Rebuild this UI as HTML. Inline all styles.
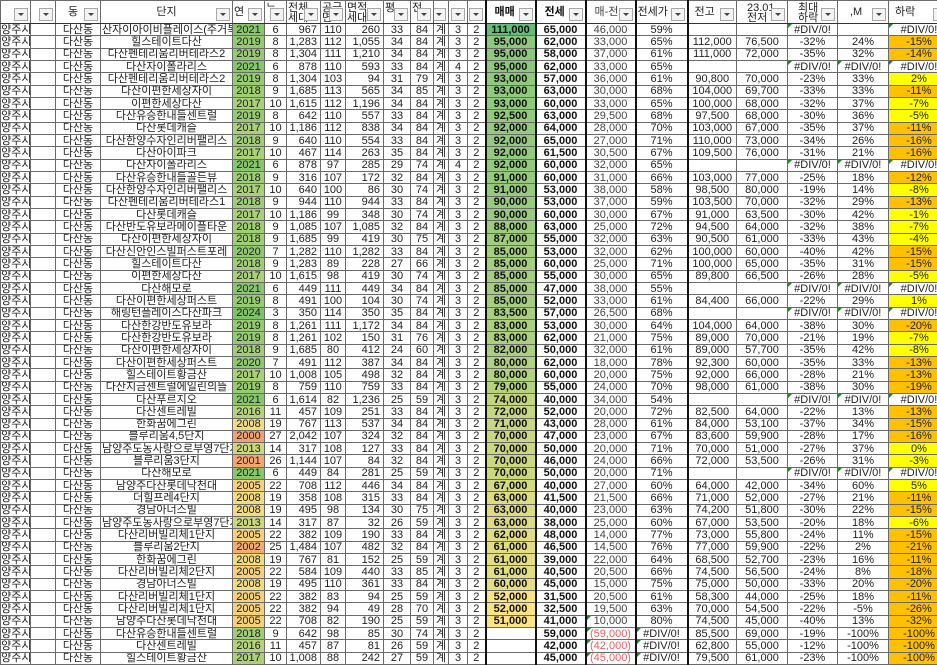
<!DOCTYPE html>
<html><head><meta charset="utf-8"><style>
body{margin:0;width:937px;height:664px;overflow:hidden;background:#fff;font-family:"Liberation Sans","Noto Sans CJK KR",sans-serif;}
table{border-collapse:collapse;table-layout:fixed;position:absolute;left:0;top:0;width:949px}
td{border:1px solid #6a6a6a;padding:0 1px;font-size:11px;line-height:10px;white-space:nowrap;overflow:hidden;text-align:center;color:#222;position:relative}
tr{height:12.33px}
tr.h{height:23px}
tr.h td{vertical-align:top;padding-top:2px;font-size:11px;line-height:10px;border-bottom:1px solid #333}
td:nth-child(1){text-align:left}
td:nth-child(7),td:nth-child(9){text-align:right;padding-right:3px}
td:nth-child(15),td:nth-child(16),td:nth-child(17),td:nth-child(18),td:nth-child(19){border-left:2px solid #111}
td:nth-child(15),td:nth-child(16){font-weight:bold;color:#111}
td:nth-child(17){color:#444}
.a{margin-left:-11px}
.f{position:absolute;right:2px;bottom:2px;width:12px;height:11px;border:1px solid #a8a8a8;background:#f3f3f3}
.f:after{content:"";position:absolute;left:3px;top:4px;border-left:3px solid transparent;border-right:3px solid transparent;border-top:3px solid #444}
.e:before{content:"";position:absolute;left:0;top:0;border-top:4px solid #1a8a1a;border-right:4px solid transparent}
.o{background:#ffc000}.y{background:#ffff00}
.red{color:#f06060!important}
.y24{background:#7ec36a}.y21{background:#88c66c}.y20{background:#8fc870}.y19{background:#97cb72}.y18{background:#a0ce74}.y17{background:#a9d177}.y16{background:#b5d47a}.y13{background:#cbd87c}.y08{background:#f3dc7a}.y05{background:#f6d17a}.y02{background:#f4ad70}.y01{background:#f4a66f}.y00{background:#f3a16e}
</style></head><body>
<table>
<colgroup><col style="width:30px"><col style="width:25px"><col style="width:45px"><col style="width:132px"><col style="width:32px"><col style="width:22px"><col style="width:34px"><col style="width:25px"><col style="width:38px"><col style="width:27px"><col style="width:23px"><col style="width:15px"><col style="width:19px"><col style="width:18px"><col style="width:50px"><col style="width:50px"><col style="width:50px"><col style="width:52px"><col style="width:49px"><col style="width:51px"><col style="width:50px"><col style="width:51px"><col style="width:61px"></colgroup>
<tr class="h"><td><i class="f"></i></td><td><i class="f"></i></td><td style="padding-top:6px;text-align:left;padding-left:12px">동<i class="f"></i></td><td style="padding-top:6px">단지<i class="f"></i></td><td style="padding-top:6px;text-align:left">연<i class="f"></i></td><td style="text-align:left">ᄂ<i class="f"></i></td><td style="text-align:left">전체<br>세대<i class="f"></i></td><td style="text-align:left">공급<br>면<i class="f"></i></td><td style="text-align:left">면적<br>세대<i class="f"></i></td><td style="text-align:left">평<i class="f"></i></td><td style="text-align:left">전<i class="f"></i></td><td><i class="f"></i></td><td><i class="f"></i></td><td><i class="f"></i></td><td style="padding-top:6px;text-align:left;padding-left:8px">매매<i class="f"></i></td><td style="padding-top:6px;text-align:left;padding-left:8px">전세<i class="f"></i></td><td style="padding-top:6px;text-align:left;padding-left:8px">매-전<i class="f"></i></td><td style="padding-top:6px;text-align:left">전세가<i class="f"></i></td><td style="padding-top:6px;text-align:left;padding-left:6px">전고<i class="f"></i></td><td style="text-align:left;padding-left:10px">23.01<br>전저<i class="f"></i></td><td style="text-align:left;padding-left:10px">최대<br>하락<i class="f"></i></td><td style="padding-top:6px;text-align:left;padding-left:12px">,M<i class="f"></i></td><td style="padding-top:6px;text-align:left;padding-left:6px">하락<i class="f"></i></td></tr>
<tr><td><span class="a">남양주시</span></td><td></td><td>다산동</td><td>산자이아이비플레이스(주거복합)</td><td class="y21">2021</td><td>6</td><td>967</td><td>110</td><td>260</td><td>33</td><td>84</td><td>계</td><td>3</td><td>2</td><td style="background:#63be7b">111,000</td><td>65,000</td><td>46,000</td><td>59%</td><td></td><td></td><td class="e">#DIV/0!</td><td></td><td class="e">#DIV/0!</td></tr>
<tr><td><span class="a">남양주시</span></td><td></td><td>다산동</td><td>힐스테이트다산</td><td class="y19">2019</td><td>8</td><td>1,283</td><td>112</td><td>1,055</td><td>34</td><td>84</td><td>계</td><td>3</td><td>2</td><td style="background:color-mix(in srgb,#fde483 27%,#63be7b)">95,000</td><td>62,000</td><td>33,000</td><td>65%</td><td>112,000</td><td>76,500</td><td>-32%</td><td>24%</td><td class="o">-15%</td></tr>
<tr><td><span class="a">남양주시</span></td><td></td><td>다산동</td><td>다산펜테리움리버테라스2</td><td class="y19">2019</td><td>8</td><td>1,304</td><td>111</td><td>1,210</td><td>34</td><td>84</td><td>계</td><td>3</td><td>2</td><td style="background:color-mix(in srgb,#fde483 27%,#63be7b)">95,000</td><td>58,000</td><td>37,000</td><td>61%</td><td>111,000</td><td>72,000</td><td>-35%</td><td>32%</td><td class="o">-14%</td></tr>
<tr><td><span class="a">남양주시</span></td><td></td><td>다산동</td><td>다산자이폴라리스</td><td class="y21">2021</td><td>6</td><td>878</td><td>110</td><td>593</td><td>33</td><td>84</td><td>계</td><td>4</td><td>2</td><td style="background:color-mix(in srgb,#fde483 27%,#63be7b)">95,000</td><td>62,000</td><td>33,000</td><td>65%</td><td></td><td></td><td class="e">#DIV/0!</td><td class="e">#DIV/0!</td><td class="e">#DIV/0!</td></tr>
<tr><td><span class="a">남양주시</span></td><td></td><td>다산동</td><td>다산펜테리움리버테라스2</td><td class="y19">2019</td><td>8</td><td>1,304</td><td>103</td><td>94</td><td>31</td><td>79</td><td>계</td><td>3</td><td>2</td><td style="background:color-mix(in srgb,#fde483 30%,#63be7b)">93,000</td><td>57,000</td><td>36,000</td><td>61%</td><td>90,800</td><td>70,000</td><td>-23%</td><td>33%</td><td class="y">2%</td></tr>
<tr><td><span class="a">남양주시</span></td><td></td><td>다산동</td><td>다산이편한세상자이</td><td class="y18">2018</td><td>9</td><td>1,685</td><td>113</td><td>565</td><td>34</td><td>85</td><td>계</td><td>3</td><td>2</td><td style="background:color-mix(in srgb,#fde483 30%,#63be7b)">93,000</td><td>63,000</td><td>30,000</td><td>68%</td><td>104,000</td><td>69,700</td><td>-33%</td><td>33%</td><td class="o">-11%</td></tr>
<tr><td><span class="a">남양주시</span></td><td></td><td>다산동</td><td>이편한세상다산</td><td class="y17">2017</td><td>10</td><td>1,615</td><td>112</td><td>1,196</td><td>34</td><td>84</td><td>계</td><td>3</td><td>2</td><td style="background:color-mix(in srgb,#fde483 30%,#63be7b)">93,000</td><td>60,000</td><td>33,000</td><td>65%</td><td>100,000</td><td>68,000</td><td>-32%</td><td>37%</td><td class="y">-7%</td></tr>
<tr><td><span class="a">남양주시</span></td><td></td><td>다산동</td><td>다산유승한내들센트럴</td><td class="y19">2019</td><td>8</td><td>642</td><td>110</td><td>557</td><td>33</td><td>84</td><td>계</td><td>3</td><td>2</td><td style="background:color-mix(in srgb,#fde483 31%,#63be7b)">92,500</td><td>63,000</td><td>29,500</td><td>68%</td><td>97,500</td><td>68,000</td><td>-30%</td><td>36%</td><td class="y">-5%</td></tr>
<tr><td><span class="a">남양주시</span></td><td></td><td>다산동</td><td>다산롯데캐슬</td><td class="y17">2017</td><td>10</td><td>1,186</td><td>112</td><td>838</td><td>34</td><td>84</td><td>계</td><td>3</td><td>2</td><td style="background:color-mix(in srgb,#fde483 32%,#63be7b)">92,000</td><td>64,000</td><td>28,000</td><td>70%</td><td>103,000</td><td>67,000</td><td>-35%</td><td>37%</td><td class="o">-11%</td></tr>
<tr><td><span class="a">남양주시</span></td><td></td><td>다산동</td><td>다산한양수자인리버팰리스</td><td class="y18">2018</td><td>9</td><td>640</td><td>110</td><td>554</td><td>33</td><td>84</td><td>계</td><td>3</td><td>2</td><td style="background:color-mix(in srgb,#fde483 32%,#63be7b)">92,000</td><td>65,000</td><td>27,000</td><td>71%</td><td>110,000</td><td>73,000</td><td>-34%</td><td>26%</td><td class="o">-16%</td></tr>
<tr><td><span class="a">남양주시</span></td><td></td><td>다산동</td><td>다산아이파크</td><td class="y17">2017</td><td>10</td><td>467</td><td>114</td><td>263</td><td>35</td><td>84</td><td>계</td><td>3</td><td>2</td><td style="background:color-mix(in srgb,#fde483 32%,#63be7b)">92,000</td><td>61,500</td><td>30,500</td><td>67%</td><td>109,500</td><td>76,000</td><td>-31%</td><td>21%</td><td class="o">-16%</td></tr>
<tr><td><span class="a">남양주시</span></td><td></td><td>다산동</td><td>다산자이폴라리스</td><td class="y21">2021</td><td>6</td><td>878</td><td>97</td><td>285</td><td>29</td><td>74</td><td>계</td><td>4</td><td>2</td><td style="background:color-mix(in srgb,#fde483 32%,#63be7b)">92,000</td><td>60,000</td><td>32,000</td><td>65%</td><td></td><td></td><td class="e">#DIV/0!</td><td class="e">#DIV/0!</td><td class="e">#DIV/0!</td></tr>
<tr><td><span class="a">남양주시</span></td><td></td><td>다산동</td><td>다산유승한내들골든뷰</td><td class="y18">2018</td><td>9</td><td>316</td><td>107</td><td>172</td><td>32</td><td>84</td><td>계</td><td>3</td><td>2</td><td style="background:color-mix(in srgb,#fde483 33%,#63be7b)">91,000</td><td>60,000</td><td>31,000</td><td>66%</td><td>103,000</td><td>77,000</td><td>-25%</td><td>18%</td><td class="o">-12%</td></tr>
<tr><td><span class="a">남양주시</span></td><td></td><td>다산동</td><td>다산한양수자인리버팰리스</td><td class="y17">2017</td><td>10</td><td>640</td><td>100</td><td>86</td><td>30</td><td>74</td><td>계</td><td>3</td><td>2</td><td style="background:color-mix(in srgb,#fde483 33%,#63be7b)">91,000</td><td>53,000</td><td>38,000</td><td>58%</td><td>98,500</td><td>80,000</td><td>-19%</td><td>14%</td><td class="y">-8%</td></tr>
<tr><td><span class="a">남양주시</span></td><td></td><td>다산동</td><td>다산펜테리움리버테라스1</td><td class="y18">2018</td><td>9</td><td>944</td><td>110</td><td>944</td><td>33</td><td>84</td><td>계</td><td>3</td><td>2</td><td style="background:color-mix(in srgb,#fde483 35%,#63be7b)">90,000</td><td>53,000</td><td>37,000</td><td>59%</td><td>103,500</td><td>70,000</td><td>-32%</td><td>29%</td><td class="o">-13%</td></tr>
<tr><td><span class="a">남양주시</span></td><td></td><td>다산동</td><td>다산롯데캐슬</td><td class="y17">2017</td><td>10</td><td>1,186</td><td>99</td><td>348</td><td>30</td><td>74</td><td>계</td><td>3</td><td>2</td><td style="background:color-mix(in srgb,#fde483 35%,#63be7b)">90,000</td><td>60,000</td><td>30,000</td><td>67%</td><td>91,000</td><td>63,500</td><td>-30%</td><td>42%</td><td class="y">-1%</td></tr>
<tr><td><span class="a">남양주시</span></td><td></td><td>다산동</td><td>다산반도유보라메이플타운</td><td class="y18">2018</td><td>9</td><td>1,085</td><td>107</td><td>1,085</td><td>32</td><td>84</td><td>계</td><td>3</td><td>2</td><td style="background:color-mix(in srgb,#fde483 38%,#63be7b)">88,000</td><td>63,000</td><td>25,000</td><td>72%</td><td>94,500</td><td>64,000</td><td>-32%</td><td>38%</td><td class="y">-7%</td></tr>
<tr><td><span class="a">남양주시</span></td><td></td><td>다산동</td><td>다산이편한세상자이</td><td class="y18">2018</td><td>9</td><td>1,685</td><td>99</td><td>419</td><td>30</td><td>75</td><td>계</td><td>3</td><td>2</td><td style="background:color-mix(in srgb,#fde483 40%,#63be7b)">87,000</td><td>55,000</td><td>32,000</td><td>63%</td><td>90,500</td><td>61,000</td><td>-33%</td><td>43%</td><td class="y">-4%</td></tr>
<tr><td><span class="a">남양주시</span></td><td></td><td>다산동</td><td>다산신안인스빌퍼스트포레</td><td class="y20">2020</td><td>7</td><td>1,282</td><td>110</td><td>1,282</td><td>33</td><td>84</td><td>계</td><td>3</td><td>2</td><td style="background:color-mix(in srgb,#fde483 43%,#63be7b)">85,000</td><td>53,000</td><td>32,000</td><td>62%</td><td>100,000</td><td>60,000</td><td>-40%</td><td>42%</td><td class="o">-15%</td></tr>
<tr><td><span class="a">남양주시</span></td><td></td><td>다산동</td><td>힐스테이트다산</td><td class="y18">2018</td><td>9</td><td>1,283</td><td>89</td><td>228</td><td>27</td><td>66</td><td>계</td><td>3</td><td>2</td><td style="background:color-mix(in srgb,#fde483 43%,#63be7b)">85,000</td><td>60,000</td><td>25,000</td><td>71%</td><td>100,000</td><td>65,000</td><td>-35%</td><td>31%</td><td class="o">-15%</td></tr>
<tr><td><span class="a">남양주시</span></td><td></td><td>다산동</td><td>이편한세상다산</td><td class="y17">2017</td><td>10</td><td>1,615</td><td>98</td><td>419</td><td>30</td><td>74</td><td>계</td><td>3</td><td>2</td><td style="background:color-mix(in srgb,#fde483 43%,#63be7b)">85,000</td><td>55,000</td><td>30,000</td><td>65%</td><td>89,800</td><td>66,500</td><td>-26%</td><td>28%</td><td class="y">-5%</td></tr>
<tr><td><span class="a">남양주시</span></td><td></td><td>다산동</td><td>다산해모로</td><td class="y21">2021</td><td>6</td><td>449</td><td>111</td><td>449</td><td>34</td><td>84</td><td>계</td><td>3</td><td>2</td><td style="background:color-mix(in srgb,#fde483 43%,#63be7b)">85,000</td><td>47,000</td><td>38,000</td><td>55%</td><td></td><td></td><td class="e">#DIV/0!</td><td class="e">#DIV/0!</td><td class="e">#DIV/0!</td></tr>
<tr><td><span class="a">남양주시</span></td><td></td><td>다산동</td><td>다산이편한세상퍼스트</td><td class="y19">2019</td><td>8</td><td>491</td><td>100</td><td>104</td><td>30</td><td>74</td><td>계</td><td>3</td><td>2</td><td style="background:color-mix(in srgb,#fde483 43%,#63be7b)">85,000</td><td>52,000</td><td>33,000</td><td>61%</td><td>84,400</td><td>66,000</td><td>-22%</td><td>29%</td><td class="y">1%</td></tr>
<tr><td><span class="a">남양주시</span></td><td></td><td>다산동</td><td>해링턴플레이스다산파크</td><td class="y24">2024</td><td>3</td><td>350</td><td>114</td><td>350</td><td>35</td><td>84</td><td>계</td><td>3</td><td>2</td><td style="background:color-mix(in srgb,#fde483 46%,#63be7b)">83,500</td><td>57,000</td><td>26,500</td><td>68%</td><td></td><td></td><td class="e">#DIV/0!</td><td class="e">#DIV/0!</td><td class="e">#DIV/0!</td></tr>
<tr><td><span class="a">남양주시</span></td><td></td><td>다산동</td><td>다산한강반도유보라</td><td class="y19">2019</td><td>8</td><td>1,261</td><td>111</td><td>1,172</td><td>34</td><td>84</td><td>계</td><td>3</td><td>2</td><td style="background:color-mix(in srgb,#fde483 47%,#63be7b)">83,000</td><td>53,000</td><td>30,000</td><td>64%</td><td>104,000</td><td>64,000</td><td>-38%</td><td>30%</td><td class="o">-20%</td></tr>
<tr><td><span class="a">남양주시</span></td><td></td><td>다산동</td><td>다산한강반도유보라</td><td class="y19">2019</td><td>8</td><td>1,261</td><td>102</td><td>150</td><td>31</td><td>76</td><td>계</td><td>3</td><td>2</td><td style="background:color-mix(in srgb,#fde483 47%,#63be7b)">83,000</td><td>62,000</td><td>21,000</td><td>75%</td><td>89,000</td><td>70,000</td><td>-21%</td><td>19%</td><td class="y">-7%</td></tr>
<tr><td><span class="a">남양주시</span></td><td></td><td>다산동</td><td>다산이편한세상자이</td><td class="y18">2018</td><td>9</td><td>1,685</td><td>80</td><td>412</td><td>24</td><td>60</td><td>계</td><td>3</td><td>2</td><td style="background:color-mix(in srgb,#fde483 48%,#63be7b)">82,000</td><td>50,000</td><td>32,000</td><td>61%</td><td>89,000</td><td>57,700</td><td>-35%</td><td>42%</td><td class="y">-8%</td></tr>
<tr><td><span class="a">남양주시</span></td><td></td><td>다산동</td><td>다산이편한세상퍼스트</td><td class="y20">2020</td><td>7</td><td>491</td><td>112</td><td>387</td><td>34</td><td>84</td><td>계</td><td>3</td><td>2</td><td style="background:color-mix(in srgb,#fde483 52%,#63be7b)">80,000</td><td>62,000</td><td>18,000</td><td>78%</td><td>92,300</td><td>60,000</td><td>-35%</td><td>33%</td><td class="o">-13%</td></tr>
<tr><td><span class="a">남양주시</span></td><td></td><td>다산동</td><td>힐스테이트황금산</td><td class="y17">2017</td><td>10</td><td>1,008</td><td>105</td><td>498</td><td>32</td><td>84</td><td>계</td><td>3</td><td>2</td><td style="background:color-mix(in srgb,#fde483 52%,#63be7b)">80,000</td><td>60,000</td><td>20,000</td><td>75%</td><td>92,000</td><td>66,000</td><td>-28%</td><td>21%</td><td class="o">-13%</td></tr>
<tr><td><span class="a">남양주시</span></td><td></td><td>다산동</td><td>다산지금센트럴에일린의뜰</td><td class="y19">2019</td><td>8</td><td>759</td><td>110</td><td>759</td><td>33</td><td>84</td><td>계</td><td>3</td><td>2</td><td style="background:color-mix(in srgb,#fde483 53%,#63be7b)">79,000</td><td>55,000</td><td>24,000</td><td>70%</td><td>98,000</td><td>61,000</td><td>-38%</td><td>30%</td><td class="o">-19%</td></tr>
<tr><td><span class="a">남양주시</span></td><td></td><td>다산동</td><td>다산푸르지오</td><td class="y21">2021</td><td>6</td><td>1,614</td><td>82</td><td>1,236</td><td>25</td><td>59</td><td>계</td><td>3</td><td>2</td><td style="background:color-mix(in srgb,#fde483 62%,#63be7b)">74,000</td><td>40,000</td><td>34,000</td><td>54%</td><td></td><td></td><td class="e">#DIV/0!</td><td class="e">#DIV/0!</td><td class="e">#DIV/0!</td></tr>
<tr><td><span class="a">남양주시</span></td><td></td><td>다산동</td><td>다산센트레빌</td><td class="y16">2016</td><td>11</td><td>457</td><td>109</td><td>251</td><td>33</td><td>84</td><td>계</td><td>3</td><td>2</td><td style="background:color-mix(in srgb,#fde483 65%,#63be7b)">72,000</td><td>52,000</td><td>20,000</td><td>72%</td><td>82,500</td><td>64,000</td><td>-22%</td><td>13%</td><td class="o">-13%</td></tr>
<tr><td><span class="a">남양주시</span></td><td></td><td>다산동</td><td>한화꿈에그린</td><td class="y08">2008</td><td>19</td><td>767</td><td>113</td><td>537</td><td>34</td><td>84</td><td>계</td><td>3</td><td>2</td><td style="background:color-mix(in srgb,#fde483 67%,#63be7b)">71,000</td><td>43,000</td><td>28,000</td><td>61%</td><td>84,000</td><td>53,100</td><td>-37%</td><td>34%</td><td class="o">-15%</td></tr>
<tr><td><span class="a">남양주시</span></td><td></td><td>다산동</td><td>블루리움4,5단지</td><td class="y00">2000</td><td>27</td><td>2,042</td><td>107</td><td>324</td><td>32</td><td>84</td><td>계</td><td>3</td><td>2</td><td style="background:color-mix(in srgb,#fde483 68%,#63be7b)">70,000</td><td>47,000</td><td>23,000</td><td>67%</td><td>83,600</td><td>59,900</td><td>-28%</td><td>17%</td><td class="o">-16%</td></tr>
<tr><td><span class="a">남양주시</span></td><td></td><td>다산동</td><td>남양주도농사랑으로부영7단지</td><td class="y13">2013</td><td>14</td><td>317</td><td>108</td><td>127</td><td>33</td><td>84</td><td>계</td><td>3</td><td>2</td><td style="background:color-mix(in srgb,#fde483 68%,#63be7b)">70,000</td><td>50,000</td><td>20,000</td><td>71%</td><td>70,000</td><td>51,000</td><td>-27%</td><td>37%</td><td class="y">0%</td></tr>
<tr><td><span class="a">남양주시</span></td><td></td><td>다산동</td><td>블루리움3단지</td><td class="y01">2001</td><td>26</td><td>1,144</td><td>107</td><td>84</td><td>32</td><td>84</td><td>계</td><td>3</td><td>2</td><td style="background:color-mix(in srgb,#fde483 68%,#63be7b)">70,000</td><td>46,000</td><td>24,000</td><td>66%</td><td>72,000</td><td>53,500</td><td>-26%</td><td>31%</td><td class="y">-3%</td></tr>
<tr><td><span class="a">남양주시</span></td><td></td><td>다산동</td><td>다산해모로</td><td class="y21">2021</td><td>6</td><td>449</td><td>84</td><td>281</td><td>25</td><td>59</td><td>계</td><td>3</td><td>2</td><td style="background:color-mix(in srgb,#fde483 68%,#63be7b)">70,000</td><td>50,000</td><td>20,000</td><td>71%</td><td></td><td></td><td class="e">#DIV/0!</td><td class="e">#DIV/0!</td><td class="e">#DIV/0!</td></tr>
<tr><td><span class="a">남양주시</span></td><td></td><td>다산동</td><td>남양주다산롯데낙천대</td><td class="y05">2005</td><td>22</td><td>708</td><td>112</td><td>446</td><td>34</td><td>84</td><td>계</td><td>3</td><td>2</td><td style="background:color-mix(in srgb,#fde483 73%,#63be7b)">67,000</td><td>40,000</td><td>27,000</td><td>60%</td><td>64,000</td><td>42,000</td><td>-34%</td><td>60%</td><td class="y">5%</td></tr>
<tr><td><span class="a">남양주시</span></td><td></td><td>다산동</td><td>더힐프레4단지</td><td class="y08">2008</td><td>19</td><td>358</td><td>108</td><td>315</td><td>33</td><td>84</td><td>계</td><td>3</td><td>2</td><td style="background:color-mix(in srgb,#fde483 80%,#63be7b)">63,000</td><td>41,500</td><td>21,500</td><td>66%</td><td>71,000</td><td>52,000</td><td>-27%</td><td>21%</td><td class="o">-11%</td></tr>
<tr><td><span class="a">남양주시</span></td><td></td><td>다산동</td><td>경남아너스빌</td><td class="y08">2008</td><td>19</td><td>495</td><td>98</td><td>134</td><td>30</td><td>75</td><td>계</td><td>3</td><td>2</td><td style="background:color-mix(in srgb,#fde483 80%,#63be7b)">63,000</td><td>40,000</td><td>23,000</td><td>63%</td><td>74,200</td><td>51,800</td><td>-30%</td><td>22%</td><td class="o">-15%</td></tr>
<tr><td><span class="a">남양주시</span></td><td></td><td>다산동</td><td>남양주도농사랑으로부영7단지</td><td class="y13">2013</td><td>14</td><td>317</td><td>87</td><td>32</td><td>26</td><td>59</td><td>계</td><td>3</td><td>2</td><td style="background:color-mix(in srgb,#fde483 80%,#63be7b)">63,000</td><td>38,000</td><td>25,000</td><td>60%</td><td>67,000</td><td>53,500</td><td>-20%</td><td>18%</td><td class="y">-6%</td></tr>
<tr><td><span class="a">남양주시</span></td><td></td><td>다산동</td><td>다산리버빌리체1단지</td><td class="y05">2005</td><td>22</td><td>382</td><td>109</td><td>190</td><td>33</td><td>84</td><td>계</td><td>3</td><td>2</td><td style="background:color-mix(in srgb,#fde483 82%,#63be7b)">62,000</td><td>48,000</td><td>14,000</td><td>77%</td><td>73,000</td><td>55,800</td><td>-24%</td><td>11%</td><td class="o">-15%</td></tr>
<tr><td><span class="a">남양주시</span></td><td></td><td>다산동</td><td>블루리움2단지</td><td class="y02">2002</td><td>25</td><td>1,484</td><td>107</td><td>482</td><td>32</td><td>84</td><td>계</td><td>3</td><td>2</td><td style="background:color-mix(in srgb,#fde483 83%,#63be7b)">61,000</td><td>46,500</td><td>14,500</td><td>76%</td><td>77,000</td><td>59,900</td><td>-22%</td><td>2%</td><td class="o">-21%</td></tr>
<tr><td><span class="a">남양주시</span></td><td></td><td>다산동</td><td>한화꿈에그린</td><td class="y08">2008</td><td>19</td><td>767</td><td>81</td><td>152</td><td>25</td><td>59</td><td>계</td><td>3</td><td>2</td><td style="background:color-mix(in srgb,#fde483 83%,#63be7b)">61,000</td><td>39,000</td><td>22,000</td><td>64%</td><td>68,500</td><td>52,700</td><td>-23%</td><td>16%</td><td class="o">-11%</td></tr>
<tr><td><span class="a">남양주시</span></td><td></td><td>다산동</td><td>다산리버빌리체2단지</td><td class="y05">2005</td><td>22</td><td>584</td><td>109</td><td>440</td><td>33</td><td>85</td><td>계</td><td>3</td><td>2</td><td style="background:color-mix(in srgb,#fde483 83%,#63be7b)">61,000</td><td>40,500</td><td>20,500</td><td>66%</td><td>74,500</td><td>56,500</td><td>-24%</td><td>8%</td><td class="o">-18%</td></tr>
<tr><td><span class="a">남양주시</span></td><td></td><td>다산동</td><td>경남아너스빌</td><td class="y08">2008</td><td>19</td><td>495</td><td>110</td><td>361</td><td>33</td><td>84</td><td>계</td><td>3</td><td>2</td><td style="background:color-mix(in srgb,#fde483 85%,#63be7b)">60,000</td><td>45,000</td><td>15,000</td><td>75%</td><td>75,000</td><td>50,000</td><td>-33%</td><td>20%</td><td class="o">-20%</td></tr>
<tr><td><span class="a">남양주시</span></td><td></td><td>다산동</td><td>다산리버빌리체1단지</td><td class="y05">2005</td><td>22</td><td>382</td><td>83</td><td>94</td><td>25</td><td>59</td><td>계</td><td>3</td><td>2</td><td style="background:color-mix(in srgb,#fde483 98%,#63be7b)">52,000</td><td>31,500</td><td>20,500</td><td>61%</td><td>58,300</td><td>44,000</td><td>-25%</td><td>18%</td><td class="o">-11%</td></tr>
<tr><td><span class="a">남양주시</span></td><td></td><td>다산동</td><td>다산리버빌리체1단지</td><td class="y05">2005</td><td>22</td><td>382</td><td>94</td><td>49</td><td>28</td><td>70</td><td>계</td><td>3</td><td>2</td><td style="background:color-mix(in srgb,#fde483 98%,#63be7b)">52,000</td><td>32,500</td><td>19,500</td><td>63%</td><td>70,000</td><td>54,500</td><td>-22%</td><td>-5%</td><td class="o">-26%</td></tr>
<tr><td><span class="a">남양주시</span></td><td></td><td>다산동</td><td>남양주다산롯데낙천대</td><td class="y05">2005</td><td>22</td><td>708</td><td>82</td><td>190</td><td>25</td><td>59</td><td>계</td><td>3</td><td>2</td><td style="background:#fde483">51,000</td><td>41,000</td><td class="e">10,000</td><td>80%</td><td>74,500</td><td>45,000</td><td>-40%</td><td>13%</td><td class="o">-32%</td></tr>
<tr><td><span class="a">남양주시</span></td><td></td><td>다산동</td><td>다산유승한내들센트럴</td><td class="y18">2018</td><td>9</td><td>642</td><td>98</td><td>85</td><td>30</td><td>74</td><td>계</td><td>3</td><td>2</td><td></td><td>59,000</td><td class="e red">(59,000)</td><td class="e">#DIV/0!</td><td>85,500</td><td>69,000</td><td>-19%</td><td>-100%</td><td class="o">-100%</td></tr>
<tr><td><span class="a">남양주시</span></td><td></td><td>다산동</td><td>다산센트레빌</td><td class="y16">2016</td><td>11</td><td>457</td><td>87</td><td>81</td><td>26</td><td>59</td><td>계</td><td>3</td><td>2</td><td></td><td>42,000</td><td class="e red">(42,000)</td><td class="e">#DIV/0!</td><td>62,800</td><td>55,000</td><td>-12%</td><td>-100%</td><td class="o">-100%</td></tr>
<tr><td><span class="a">남양주시</span></td><td></td><td>다산동</td><td>힐스테이트황금산</td><td class="y17">2017</td><td>10</td><td>1,008</td><td>88</td><td>242</td><td>27</td><td>59</td><td>계</td><td>3</td><td>2</td><td></td><td>45,000</td><td class="e red">(45,000)</td><td class="e">#DIV/0!</td><td>79,500</td><td>61,000</td><td>-23%</td><td>-100%</td><td class="o">-100%</td></tr>
</table>
</body></html>
